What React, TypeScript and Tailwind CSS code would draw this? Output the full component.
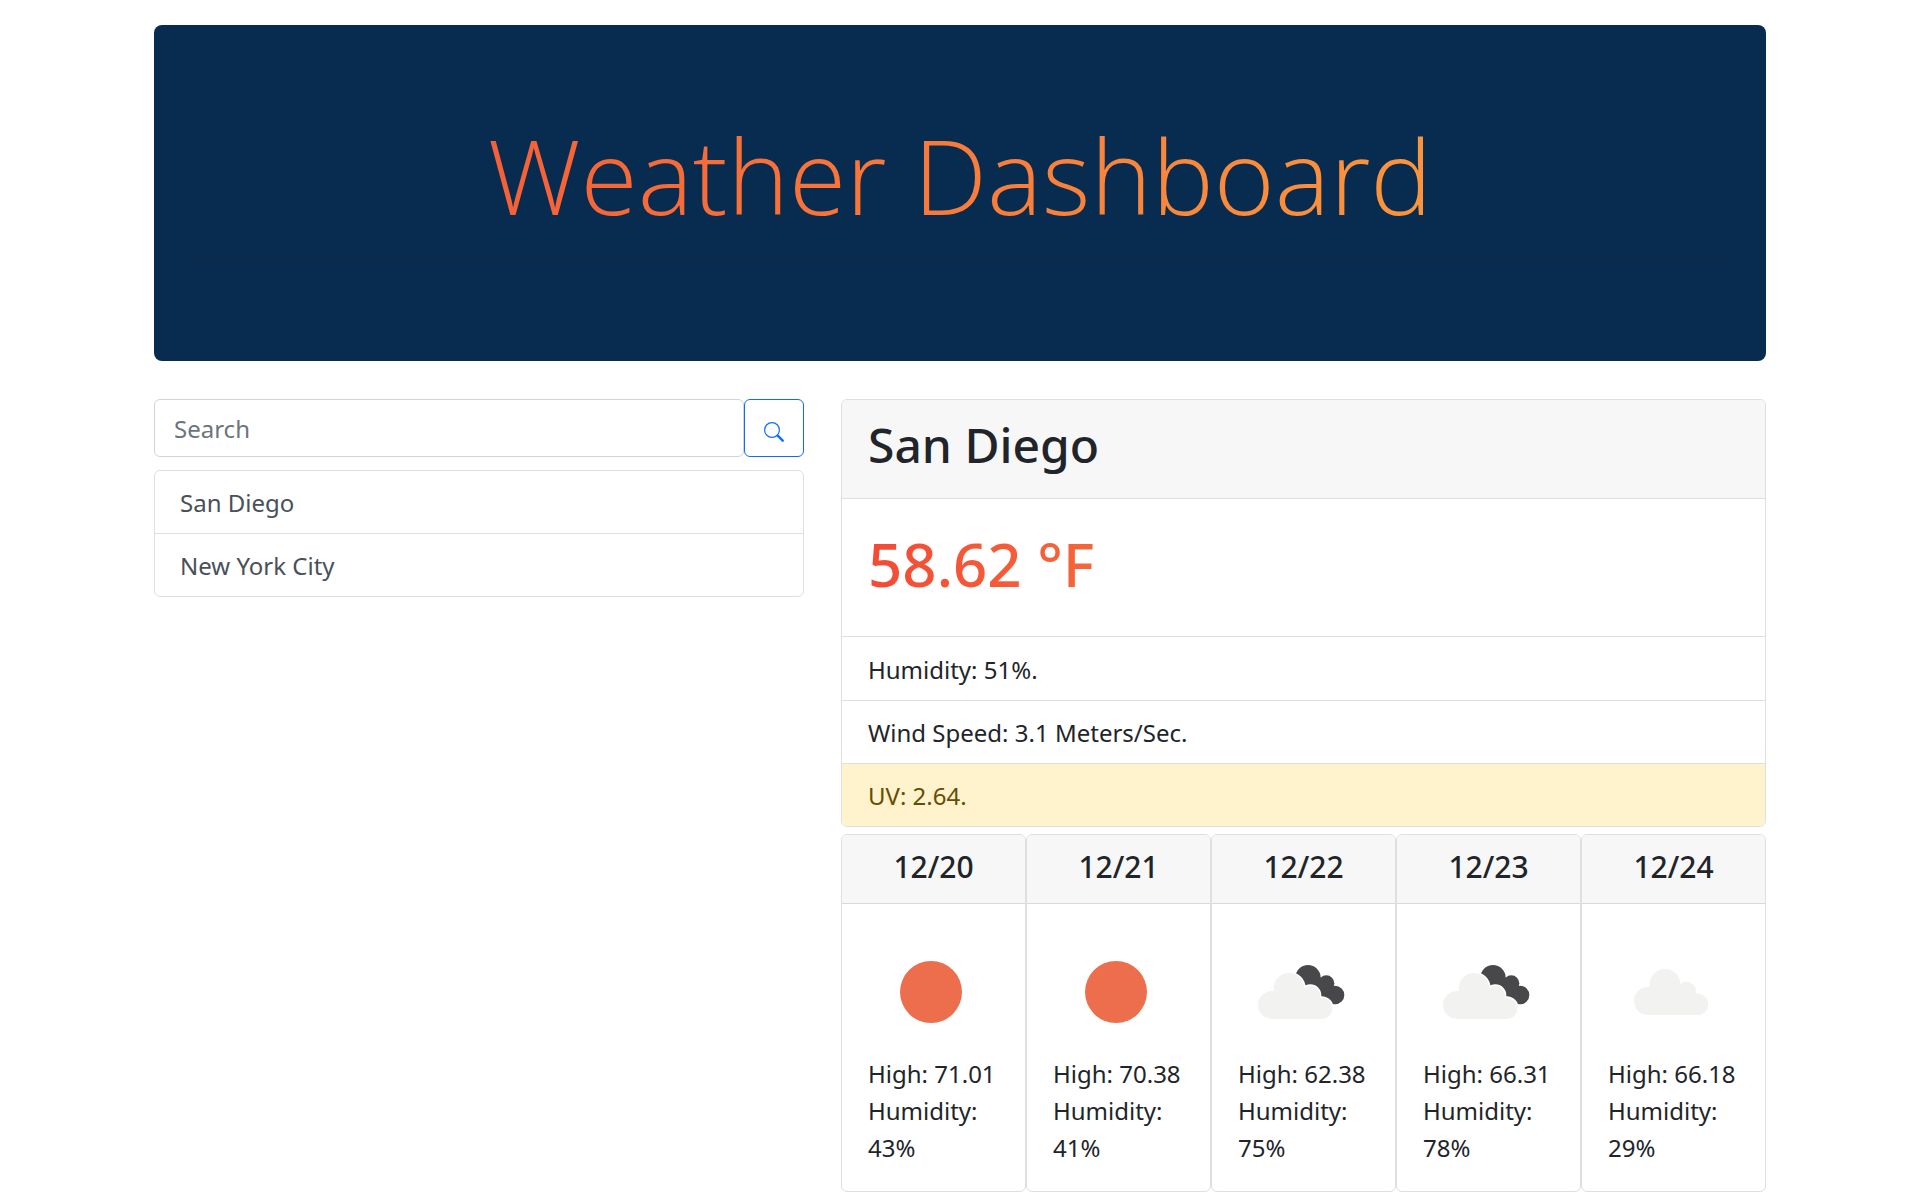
import React from "react";

type Kind = "sun" | "clouds" | "cloud";

const days: { date: string; kind: Kind; high: string; humidity: string }[] = [
  { date: "12/20", kind: "sun", high: "71.01", humidity: "43%" },
  { date: "12/21", kind: "sun", high: "70.38", humidity: "41%" },
  { date: "12/22", kind: "clouds", high: "62.38", humidity: "75%" },
  { date: "12/23", kind: "clouds", high: "66.31", humidity: "78%" },
  { date: "12/24", kind: "cloud", high: "66.18", humidity: "29%" },
];

function CloudShape() {
  return (
    <>
      <circle cx="216" cy="555" r="42" />
      <circle cx="267" cy="505" r="46" />
      <circle cx="331" cy="526" r="29" />
      <circle cx="365" cy="565" r="32" />
      <path d="M216 513H350L365 540V597H216Z" />
    </>
  );
}

function DarkCloudShape() {
  return (
    <>
      <circle cx="324" cy="473" r="38" />
      <circle cx="379" cy="490" r="24" />
      <circle cx="405" cy="525" r="28" />
      <path d="M320 475L360 472L400 500L405 552L350 530Z" />
    </>
  );
}

function WeatherIcon({ kind }: { kind: Kind }) {
  if (kind === "sun") {
    return (
      <svg viewBox="114 327 378 378" className="size-[126px]" role="img" aria-label="Clear sky">
        <circle cx="303" cy="516" r="93" fill="#ec6e4c" />
      </svg>
    );
  }
  if (kind === "cloud") {
    return (
      <svg viewBox="96 339 378 378" className="size-[126px]" role="img" aria-label="Scattered clouds">
        <g fill="#f2f2f0">
          <CloudShape />
        </g>
      </svg>
    );
  }
  return (
    <svg viewBox="114 327 378 378" className="size-[126px]" role="img" aria-label="Broken clouds">
      <g fill="#48484a">
        <DarkCloudShape />
      </g>
      <g fill="#fff" stroke="#fff" strokeWidth="8">
        <CloudShape />
      </g>
      <g fill="#f2f2f0">
        <CloudShape />
      </g>
    </svg>
  );
}

export default function App() {
  return (
    <div className="min-h-screen bg-white px-[154px] pt-[25px] pb-3 font-['Noto_Sans',sans-serif] text-[24px] leading-[37px] text-[#212529]">
      <header className="h-[336px] rounded-lg bg-[#082c4f] px-6 pt-[82px]">
        <h1 className="bg-gradient-to-r from-[#f34a36] to-[#fba53e] bg-clip-text text-center font-['Open_Sans',sans-serif] text-[104px] leading-[135px] font-light text-transparent">
          Weather Dashboard
        </h1>
        <hr className="mt-[17px] border-t-2 border-[#0d2a49]" />
      </header>

      <main className="mt-[38px] grid grid-cols-[650fr_925fr] items-start gap-[37px]">
        <section>
          <form className="flex" onSubmit={(e) => e.preventDefault()}>
            <input
              type="text"
              aria-label="Search"
              placeholder="Search"
              className="h-[58px] min-w-0 flex-1 rounded-md border border-[#ced4da] px-[19px] placeholder:text-[#6c757d]"
            />
            <button
              type="submit"
              aria-label="Search city"
              className="flex h-[58px] w-[60px] items-center justify-center rounded-md border border-[#0d6efd] pt-2 text-[#0d6efd]"
            >
              <svg viewBox="0 0 20 20" className="size-5" fill="none" stroke="currentColor">
                <circle cx="8" cy="8" r="7.4" strokeWidth="1.2" />
                <path d="M13.7 13.7L18.7 18.7" strokeWidth="2.4" strokeLinecap="round" />
              </svg>
            </button>
          </form>
          <div className="mt-[13px] divide-y divide-[#dfdfdf] rounded-md border border-[#dfdfdf] text-[#495057]">
            {["San Diego", "New York City"].map((city) => (
              <button key={city} type="button" className="block w-full px-[25px] pt-[14px] pb-3 text-left leading-[36px]">
                {city}
              </button>
            ))}
          </div>
        </section>

        <section>
          <article className="divide-y divide-[#dfdfdf] overflow-hidden rounded-md border border-[#dfdfdf]">
            <h2 className="bg-[#f7f7f7] px-[26px] pt-[15px] pb-6 text-[48px] leading-[59px] font-medium">San Diego</h2>
            <div className="px-[26px] pt-7 pb-[34px]">
              <p className="bg-gradient-to-r from-[#f34a36] to-[#fba53e] bg-clip-text text-[60px] leading-[75px] font-medium text-transparent">
                58.62 °F
              </p>
            </div>
            <p className="px-[26px] pt-[14px] pb-3">Humidity: 51%.</p>
            <p className="px-[26px] pt-[14px] pb-3 leading-[36px]">Wind Speed: 3.1 Meters/Sec.</p>
            <p className="bg-[#fff3cd] px-[26px] pt-[14px] pb-3 leading-[36px] text-[#664d03]">UV: 2.64.</p>
          </article>

          <div className="mt-[7px] grid grid-cols-5">
            {days.map((d) => (
              <article key={d.date} className="overflow-hidden rounded-md border border-[#dfdfdf]">
                <h3 className="border-b border-[#d9d9d9] bg-[#f7f7f7] pt-[14px] pb-[18px] text-center text-[30px] leading-[36px] font-medium">
                  {d.date}
                </h3>
                <div className="py-[25px] pr-5 pl-[26px]">
                  <WeatherIcon kind={d.kind} />
                  <p>High: {d.high}</p>
                  <p>Humidity: {d.humidity}</p>
                </div>
              </article>
            ))}
          </div>
        </section>
      </main>
    </div>
  );
}
